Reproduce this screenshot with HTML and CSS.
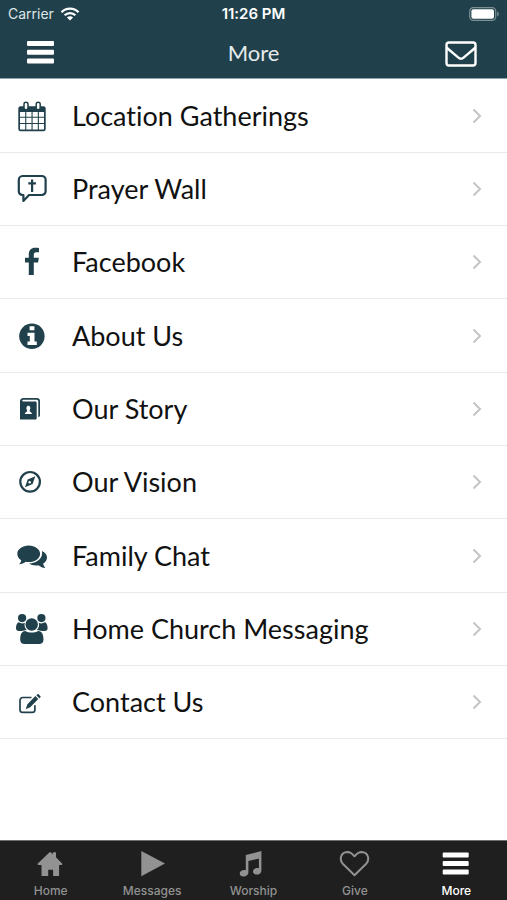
FILE: index.html
```html
<!DOCTYPE html>
<html lang="en">
<head>
<meta charset="utf-8">
<meta name="viewport" content="width=device-width, initial-scale=1">
<title>More</title>
<link rel="stylesheet" href="styles.css">
</head>
<body>
<header class="header">
  <div class="status">
    <div class="carrier">
      <span>Carrier</span>
      <svg class="wifi" viewBox="0 0 20 14" aria-hidden="true">
        <path d="M1.500 5.200a12 12 0 0 1 17 0M4.600 8.300a7.600 7.600 0 0 1 10.800 0" fill="none" stroke="currentColor" stroke-width="2.300"/>
        <path d="M10 13.600 6.900 10.500a4.400 4.400 0 0 1 6.200 0z" fill="currentColor"/>
      </svg>
    </div>
    <time class="clock">11:26 PM</time>
    <svg class="battery" viewBox="0 0 30 14" aria-hidden="true">
      <rect x=".7" y=".7" width="26" height="12.600" rx="3.600" fill="none" stroke="#7b8f95" stroke-width="1.200"/>
      <rect x="2.400" y="2.300" width="22.600" height="9.400" rx="2" fill="currentColor"/>
      <path d="M28.200 4.600v4.800c1-.4 1.600-1.300 1.600-2.400s-.6-2-1.600-2.400z" fill="#7b8f95"/>
    </svg>
  </div>
  <div class="navbar">
    <button class="nav-button" type="button" aria-label="Menu">
      <svg class="nav-icon" viewBox="0 0 32 28" aria-hidden="true" fill="currentColor">
        <rect x="2" y="2" width="27" height="5" rx="1"/><rect x="2" y="10.700" width="27" height="5" rx="1"/><rect x="2" y="19.400" width="27" height="5" rx="1"/>
      </svg>
    </button>
    <h1 class="title">More</h1>
    <button class="nav-button nav-button-end" type="button" aria-label="Mail">
      <svg class="nav-icon" viewBox="0 0 32 28" aria-hidden="true" fill="none" stroke="currentColor" stroke-width="2.400" stroke-linejoin="round">
        <rect x="1.500" y="3.500" width="29" height="23" rx="2.500"/>
        <path d="M1.500 8.500c4 3.600 8 6.800 11.600 9.900 2.200 1.900 3.600 1.900 5.800 0 3.600-3.100 7.600-6.300 11.600-9.900"/>
      </svg>
    </button>
  </div>
</header>

<main class="content">
  <ul class="menu">
    <li class="menu-item"><a class="menu-link" href="#locations">
      <svg class="icon" viewBox="0 0 32 32" aria-hidden="true">
        <rect x="2.300" y="6.300" width="27.400" height="25" rx="2.300" fill="currentColor"/>
        <g fill="#fff">
          <path d="M4 12h5.200v4.700H4zM10.300 12h5.200v4.700h-5.200zM16.600 12h5.200v4.700h-5.200zM22.900 12h5.100v4.700h-5.100z"/>
          <path d="M4 17.800h5.200v5.200H4zM10.300 17.800h5.200v5.200h-5.200zM16.600 17.800h5.200v5.200h-5.200zM22.900 17.800h5.100v5.200h-5.100z"/>
          <path d="M4 24.100h5.200v5.400H4zM10.300 24.100h5.200v5.400h-5.200zM16.600 24.100h5.200v5.400h-5.200zM22.900 24.100h5.100v5.400h-5.100z"/>
        </g>
        <g fill="#fff" stroke="currentColor" stroke-width="1.500">
          <rect x="8" y="2.300" width="4" height="7.400" rx="2"/><rect x="20.200" y="2.300" width="4" height="7.400" rx="2"/>
        </g>
      </svg>
      <span class="label">Location Gatherings</span>
      <svg class="chevron" viewBox="0 0 10 16" aria-hidden="true"><path d="M1.500 1.500 8 8l-6.500 6.500"/></svg>
    </a></li>
    <li class="menu-item"><a class="menu-link" href="#prayer">
      <svg class="icon" viewBox="0 0 32 32" aria-hidden="true" fill="none" stroke="currentColor" stroke-width="2.200" stroke-linejoin="round">
        <path d="M6.500 3h19.300a3.800 3.800 0 0 1 3.800 3.800v11.400a3.800 3.800 0 0 1-3.800 3.800H13l-5.600 5.900V22h-.9a3.700 3.700 0 0 1-3.700-3.800V6.800A3.800 3.800 0 0 1 6.500 3z"/>
        <path d="M16.100 6.500v12.400M12.300 10.300h7.600"/>
      </svg>
      <span class="label">Prayer Wall</span>
      <svg class="chevron" viewBox="0 0 10 16" aria-hidden="true"><path d="M1.500 1.500 8 8l-6.500 6.500"/></svg>
    </a></li>
    <li class="menu-item"><a class="menu-link" href="#facebook">
      <svg class="icon" viewBox="0 0 32 32" aria-hidden="true" fill="currentColor">
        <path d="M23 1.900v4.400h-2.700c-2 0-2.500 1-2.500 2.400v3.100h5l-.7 4.700h-4.300V29h-5V16.500H9v-4.700h3.800V8.200c0-4.100 2.500-6.500 6.400-6.500 1.800 0 3.200.1 3.800.2z"/>
      </svg>
      <span class="label">Facebook</span>
      <svg class="chevron" viewBox="0 0 10 16" aria-hidden="true"><path d="M1.500 1.500 8 8l-6.500 6.500"/></svg>
    </a></li>
    <li class="menu-item"><a class="menu-link" href="#about">
      <svg class="icon" viewBox="0 0 32 32" aria-hidden="true">
        <circle cx="15.900" cy="16.200" r="12.700" fill="currentColor"/>
        <path d="M13.600 6.300h4.800v4h-4.800zM11.500 12.700h7v8.900h2.300v3.400h-9.300v-3.400h2.300v-5.500h-2.300z" fill="#fff"/>
      </svg>
      <span class="label">About Us</span>
      <svg class="chevron" viewBox="0 0 10 16" aria-hidden="true"><path d="M1.500 1.500 8 8l-6.500 6.500"/></svg>
    </a></li>
    <li class="menu-item"><a class="menu-link" href="#story">
      <svg class="icon" viewBox="0 0 32 32" aria-hidden="true">
        <path d="M4 8.600A3.600 3.600 0 0 1 7.600 5h13.200A3.200 3.200 0 0 1 24 8.200v14a2 2 0 0 1-1.700 2V8.500c0-1-.6-1.700-1.700-1.700H7.400c-1.300 0-1.600 1.600-.3 1.600h12.100c.9 0 1.500.6 1.500 1.500v15.300c0 .9-.5 1.400-1.400 1.400H4z" fill="currentColor"/>
        <path d="M12.400 12.700c2 0 2.600 2.500 1.300 4.500v1c.3.800 2.200.9 2.300 2.700H8.800c.1-1.800 2-1.900 2.300-2.700v-1c-1.300-2-.7-4.500 1.300-4.500z" fill="#fff"/>
      </svg>
      <span class="label">Our Story</span>
      <svg class="chevron" viewBox="0 0 10 16" aria-hidden="true"><path d="M1.500 1.500 8 8l-6.500 6.500"/></svg>
    </a></li>
    <li class="menu-item"><a class="menu-link" href="#vision">
      <svg class="icon" viewBox="0 0 32 32" aria-hidden="true">
        <circle cx="14.100" cy="15.800" r="9.800" fill="none" stroke="currentColor" stroke-width="2.200"/>
        <path d="M19.300 10.300 16.600 18 9 21.300l2.700-7.700z" fill="currentColor"/>
        <circle cx="13.700" cy="16.200" r="1.200" fill="#fff"/>
      </svg>
      <span class="label">Our Vision</span>
      <svg class="chevron" viewBox="0 0 10 16" aria-hidden="true"><path d="M1.500 1.500 8 8l-6.500 6.500"/></svg>
    </a></li>
    <li class="menu-item"><a class="menu-link" href="#chat">
      <svg class="icon" viewBox="0 0 32 32" aria-hidden="true" fill="currentColor">
        <path d="M12.700 5.500c6.300 0 11.400 3.700 11.400 8.300s-5.100 8.300-11.400 8.300c-1 0-2-.1-2.900-.3-2 1.500-4.100 2.400-6.700 2.500 1.200-1.200 1.900-2.300 2.100-4C2.800 18.800 1.300 16.500 1.300 13.800c0-4.600 5.100-8.300 11.400-8.300z"/>
        <path d="M26 11.100c3 1.300 5 3.700 5 6.400 0 2.500-1.500 4.700-3.800 6.100.2 1.700.9 3 2.100 4.300-2.700 0-4.900-1-6.800-2.600-3.500.6-7-.1-9.600-1.700 7.600 0 14.400-4.900 13.100-12.500z"/>
      </svg>
      <span class="label">Family Chat</span>
      <svg class="chevron" viewBox="0 0 10 16" aria-hidden="true"><path d="M1.500 1.500 8 8l-6.500 6.500"/></svg>
    </a></li>
    <li class="menu-item"><a class="menu-link" href="#home-church">
      <svg class="icon" viewBox="0 0 32 32" aria-hidden="true" fill="currentColor">
        <circle cx="6.100" cy="5.100" r="4.100"/><circle cx="25.400" cy="5.100" r="4.100"/><circle cx="15.700" cy="11.500" r="6.200"/>
        <path d="M2.700 9.300c2.200 1.400 4.300 1.400 6.100.5-.8 3 .2 5.500 1.900 7.200-2 .1-3.600.6-4.800 1H3c-2 0-3-1-3-2.800 0-2.500.8-5.300 2.700-5.900z"/>
        <path d="M28.900 9.300c-2.200 1.400-4.300 1.400-6.100.5.800 3-.2 5.500-1.900 7.200 2 .1 3.600.6 4.800 1h2.900c2 0 3-1 3-2.800 0-2.500-.8-5.300-2.700-5.900z"/>
        <path d="M9.300 17.900c4 2.100 8.900 2.100 12.900 0 4 0 5.300 4 5.300 8.500 0 2.900-1.700 4.600-4.400 4.600H8.600c-2.700 0-4.400-1.700-4.400-4.600 0-4.500 1.300-8.500 5.100-8.500z"/>
      </svg>
      <span class="label">Home Church Messaging</span>
      <svg class="chevron" viewBox="0 0 10 16" aria-hidden="true"><path d="M1.500 1.500 8 8l-6.500 6.500"/></svg>
    </a></li>
    <li class="menu-item"><a class="menu-link" href="#contact">
      <svg class="icon" viewBox="0 0 32 32" aria-hidden="true">
        <path d="M15.500 11.500H6.700A2.700 2.700 0 0 0 4 14.200v9.500a2.700 2.700 0 0 0 2.700 2.700h9.500a2.700 2.700 0 0 0 2.700-2.700v-4.400" fill="none" stroke="currentColor" stroke-width="1.700"/>
        <path d="m19.400 10.100 2.800 2.900-8 8.200-4.500 2 1.700-4.900zM20.300 9.300l1-.9c.5-.4 1-.4 1.500 0l1.500 1.500c.5.500.5 1 0 1.500l-1 .9z" fill="currentColor"/>
      </svg>
      <span class="label">Contact Us</span>
      <svg class="chevron" viewBox="0 0 10 16" aria-hidden="true"><path d="M1.500 1.500 8 8l-6.500 6.500"/></svg>
    </a></li>
  </ul>
</main>

<nav class="tabbar" aria-label="Main">
  <a class="tab" href="#home">
    <svg class="tab-icon" viewBox="0 0 32 28" aria-hidden="true" fill="currentColor">
      <path d="M14.600 2.200h1.100l2.100 2V2.200h3.200v5.100l6.500 6.600-.8 1.100h-2.600v11h-6v-6.200h-4.900V26H6.500V15H3.200l-.9-1.100z"/>
    </svg>
    <span>Home</span>
  </a>
  <a class="tab" href="#messages">
    <svg class="tab-icon" viewBox="0 0 32 28" aria-hidden="true" fill="currentColor"><path d="M5.300 1 29 13.500 5.300 26.300z"/></svg>
    <span>Messages</span>
  </a>
  <a class="tab" href="#worship">
    <svg class="tab-icon" viewBox="0 0 32 28" aria-hidden="true" fill="currentColor">
      <path d="M8.800 5 24.400 1v19.400c0 2.500-2 4.200-4.600 4.200-2.200 0-3.800-1.100-3.800-3 0-2.500 2.700-4 5.900-3.400V8.400l-10.500 2.700v11.200c0 2.500-2.200 4.200-4.900 4.200-2.200 0-3.800-1.100-3.800-3 0-2.500 2.800-4 6.100-3.400z"/>
    </svg>
    <span>Worship</span>
  </a>
  <a class="tab" href="#give">
    <svg class="tab-icon" viewBox="0 0 32 28" aria-hidden="true" fill="none" stroke="currentColor" stroke-width="2" stroke-linejoin="round">
      <path d="M15.500 25.200 3.800 13.700C.3 10 1.300 2.200 8.400 2c3.300 0 5.400 2.200 7.100 4.300C17.200 4.200 19.300 2 22.600 2c7.100.2 8.100 8 4.600 11.700z"/>
    </svg>
    <span>Give</span>
  </a>
  <a class="tab tab-active" href="#more" aria-current="page">
    <svg class="tab-icon" viewBox="0 0 32 28" aria-hidden="true" fill="currentColor">
      <rect x="2.700" y="2.400" width="26" height="5" rx="1"/><rect x="2.700" y="11" width="26" height="5" rx="1"/><rect x="2.700" y="19.400" width="26" height="5" rx="1"/>
    </svg>
    <span>More</span>
  </a>
</nav>
</body>
</html>
```
FILE: styles.css
```css
* {
  box-sizing: border-box;
}

body {
  margin: 0;
  min-height: 100vh;
  display: flex;
  flex-direction: column;
  background: #fff;
  color: #111;
  font-family: Lato, "Liberation Sans", sans-serif;
  font-variant-ligatures: none;
}

.header {
  background: #20414b;
  color: #fff;
  border-bottom: 1px solid #8fa3ab;
}

.status {
  display: grid;
  grid-template-columns: 1fr auto 1fr;
  align-items: center;
  height: 27px;
  padding: 0 8px;
  font-family: Inter, "Liberation Sans", sans-serif;
  font-size: 14px;
  line-height: 20px;
}

.carrier {
  display: flex;
  align-items: center;
  gap: 6px;
  color: #dfe6e8;
}

.wifi {
  width: 20px;
  height: 14px;
  color: #fff;
}

.clock {
  font-size: 15px;
  font-weight: 600;
}

.battery {
  justify-self: end;
  width: 30px;
  height: 14px;
}

.navbar {
  display: grid;
  grid-template-columns: 1fr auto 1fr;
  align-items: center;
  height: 51px;
  padding: 0 25px;
}

.nav-button {
  display: flex;
  justify-self: start;
  padding: 0;
  border: 0;
  background: none;
  color: #fff;
}

.nav-button-end {
  justify-self: end;
  padding-right: 5px;
}

.nav-icon {
  width: 32px;
  height: 28px;
}

.title {
  margin: 0;
  color: #e6ebed;
  font-size: 22px;
  font-weight: 400;
  line-height: 28px;
}

.content {
  flex: 1;
}

.menu {
  margin: 0;
  padding: 0;
  list-style: none;
}

.menu-item {
  display: flex;
  min-height: 73px;
  border-bottom: 1px solid #e9e9e9;
}

.menu-item:nth-child(3n + 1) {
  min-height: 74px;
}

.menu-link {
  flex: 1;
  display: flex;
  align-items: center;
  gap: 24px;
  padding: 0 25px 0 16px;
  color: inherit;
  text-decoration: none;
}

.icon {
  flex: none;
  width: 32px;
  height: 32px;
  color: #20414b;
}

.label {
  flex: 1;
  font-size: 27px;
  line-height: 32px;
}

.chevron {
  flex: none;
  width: 10px;
  height: 16px;
  fill: none;
  stroke: #c4c4c6;
  stroke-width: 2;
}

.tabbar {
  display: grid;
  grid-template-columns: repeat(5, 1fr);
  height: 60px;
  border-top: 1px solid #6e6e6e;
  background: #1f1f1f;
}

.tab {
  display: flex;
  flex-direction: column;
  align-items: center;
  gap: 5px;
  padding-top: 9px;
  color: #929292;
  font-family: Inter, "Liberation Sans", sans-serif;
  font-size: 12px;
  font-weight: 500;
  line-height: 16px;
  text-decoration: none;
}

.tab-icon {
  width: 32px;
  height: 28px;
}

.tab-active {
  color: #fff;
}
```
